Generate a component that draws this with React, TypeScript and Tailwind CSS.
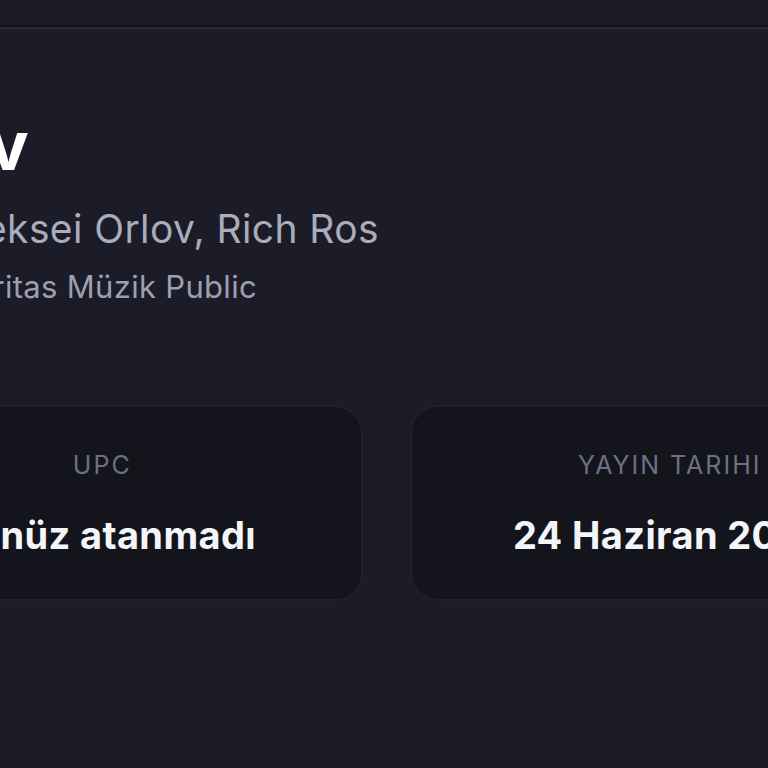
import React from "react";

const font = { fontFamily: "Inter, 'Noto Sans', sans-serif" };

export default function App() {
  return (
    <div
      className="min-h-screen w-full overflow-hidden bg-[#1b1c27] font-['Inter','Noto_Sans',sans-serif]"
      style={font}
    >
      <header className="h-[27px] bg-[#1a1a22] border-b-[2px] border-[#121218]" />
      <div className="h-[2px] bg-[#2a2b34]" />
      <div className="h-[2px] bg-[#1d1e29]" />

      <main className="flex flex-col">
        <section className="flex flex-col pt-[78px]">
          <div className="flex w-[28px] justify-end">
            <h1 className="whitespace-nowrap text-[68px] font-bold leading-[72px] tracking-[-0.01em] text-white">
              Orlov
            </h1>
          </div>
          <div className="mt-[24px] flex w-[379px] justify-end">
            <p className="whitespace-nowrap text-[39px] leading-[48px] tracking-[0.01em] text-[#aaacbd]">
              Aleksei Orlov, Rich Ros
            </p>
          </div>
          <div className="mt-[14px] flex w-[257px] justify-end">
            <p className="whitespace-nowrap text-[31px] leading-[40px] tracking-[0.01em] text-[#9d9fb1]">
              Veritas Müzik Public
            </p>
          </div>
        </section>

        <div className="ml-[-158px] mt-[98px] grid w-[1088px] grid-cols-2 gap-[47px]">
          <div className="flex h-[196px] flex-col items-center justify-center rounded-[28px] border-2 border-[#1f202a] bg-[#13141c]">
            <span className="text-[25px] uppercase leading-[32px] tracking-[0.08em] text-[#6d7082]">
              UPC
            </span>
            <span className="mt-[32px] whitespace-nowrap text-[38px] font-bold leading-[44px] tracking-[0.01em] text-[#f4f5f9]">
              Henüz atanmadı
            </span>
          </div>
          <div className="flex h-[196px] flex-col items-center justify-center rounded-[28px] border-2 border-[#1f202a] bg-[#13141c]">
            <span className="text-[25px] uppercase leading-[32px] tracking-[0.08em] text-[#6d7082]">
              YAYIN TARIHI
            </span>
            <span className="mt-[32px] whitespace-nowrap text-[38px] font-bold leading-[44px] tracking-[0.01em] text-[#f4f5f9]">
              24 Haziran 2025
            </span>
          </div>
        </div>
      </main>
    </div>
  );
}
